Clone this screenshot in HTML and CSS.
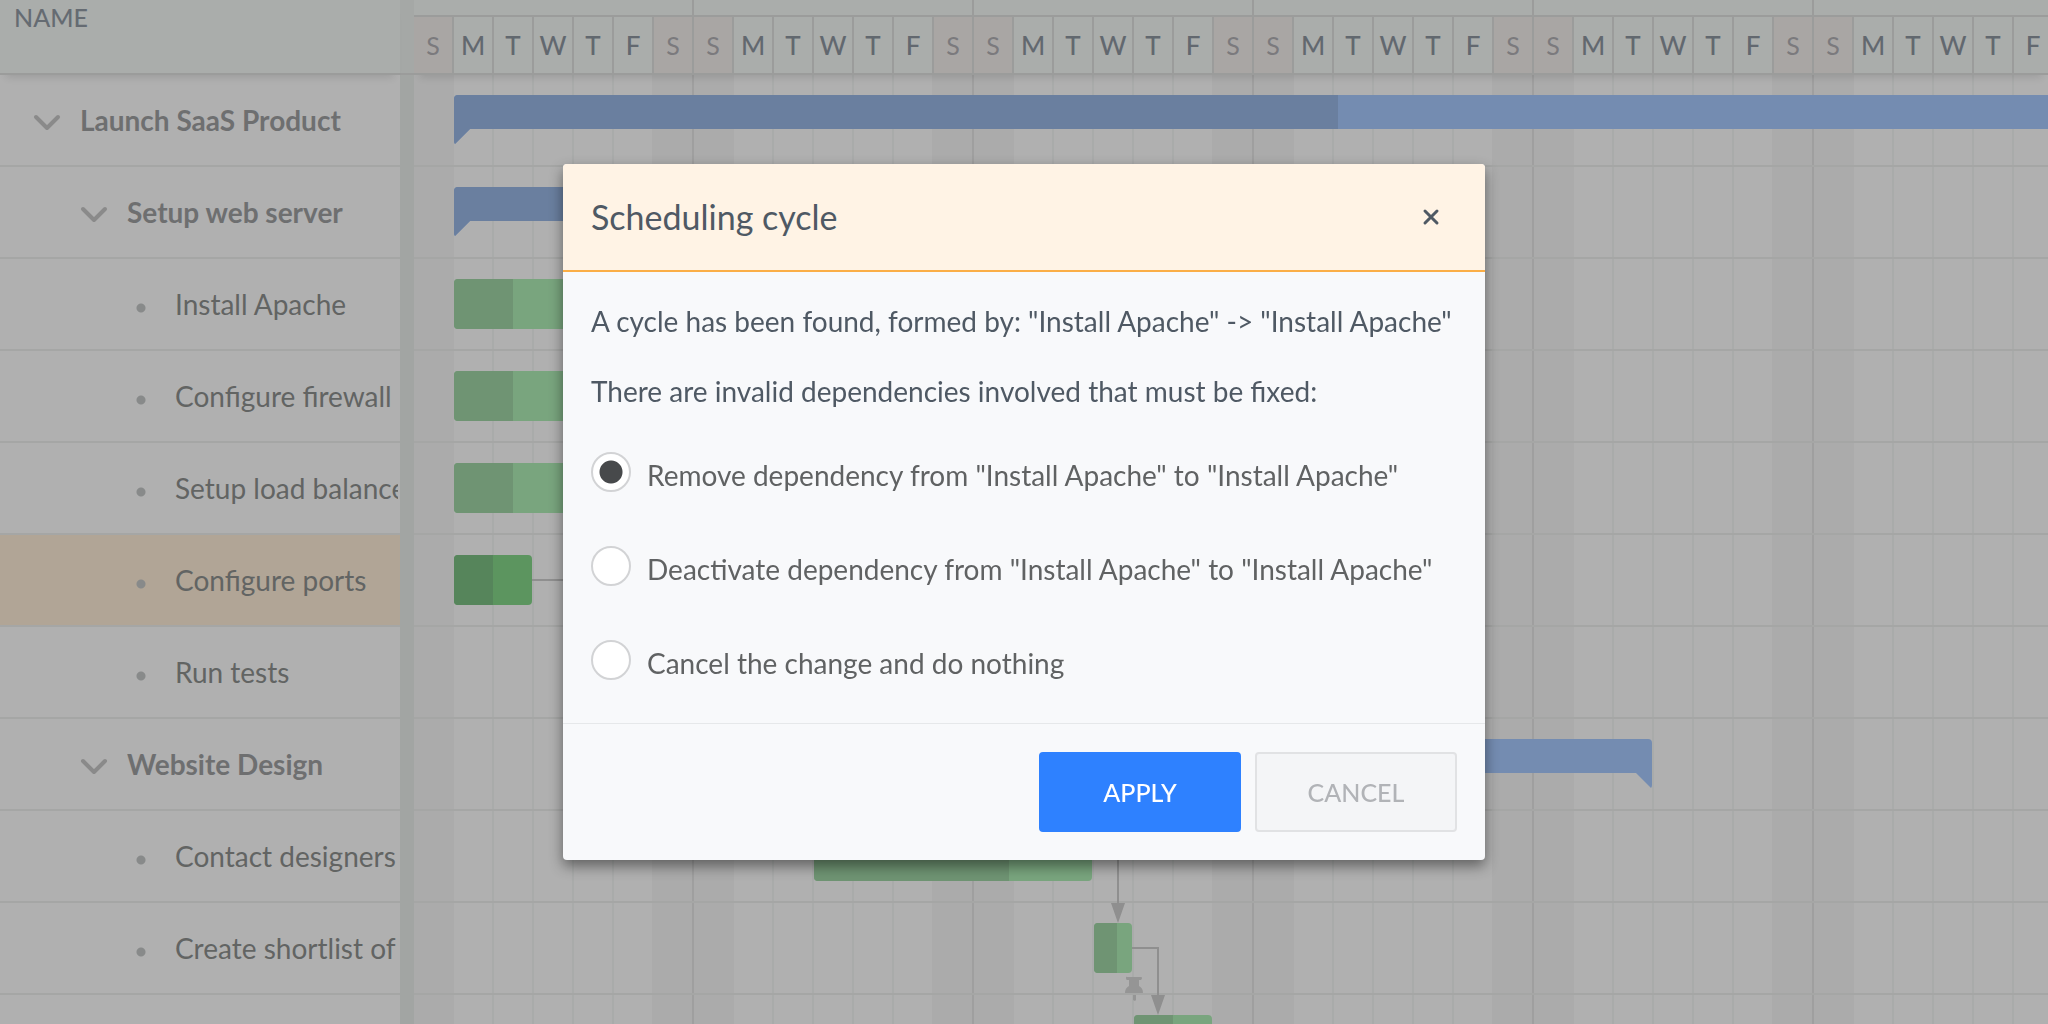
FILE: index.html
```html
<!doctype html>
<html lang="en">
<head>
<meta charset="utf-8">
<title>Scheduling cycle</title>
<link rel="stylesheet" href="styles.css">
</head>

<body>
<div class="gantt">
	<section class="tree">
		<div class="tree-header">NAME</div>
		<ul class="rows">
			<li class="row parent level-1"><button class="toggle" aria-label="Collapse"><svg viewBox="0 0 32 32"><path d="M5 13l11 11 11-11"/></svg></button><span class="name">Launch SaaS Product</span></li>
			<li class="row parent level-2"><button class="toggle" aria-label="Collapse"><svg viewBox="0 0 32 32"><path d="M5 13l11 11 11-11"/></svg></button><span class="name">Setup web server</span></li>
			<li class="row level-3"><i class="dot"></i><span class="name">Install Apache</span></li>
			<li class="row level-3"><i class="dot"></i><span class="name">Configure firewall</span></li>
			<li class="row level-3"><i class="dot"></i><span class="name">Setup load balancer</span></li>
			<li class="row level-3 selected"><i class="dot"></i><span class="name">Configure ports</span></li>
			<li class="row level-3"><i class="dot"></i><span class="name">Run tests</span></li>
			<li class="row parent level-2"><button class="toggle" aria-label="Collapse"><svg viewBox="0 0 32 32"><path d="M5 13l11 11 11-11"/></svg></button><span class="name">Website Design</span></li>
			<li class="row level-3"><i class="dot"></i><span class="name">Contact designers</span></li>
			<li class="row level-3"><i class="dot"></i><span class="name">Create shortlist of</span></li>
			<li class="row level-3"></li>
		</ul>
	</section>
	<div class="splitter"></div>
	<section class="timeline">
		<div class="time-header">
			<div class="weeks"></div>
			<div class="days" id="days"></div>
		</div>
		<div class="rows canvas">
			<div class="row"><div class="bar summary start" style="left:40px; width:1680px;"><span class="done" style="width:884px;"></span></div></div>
			<div class="row"><div class="bar summary start" style="left:40px; width:400px;"><span class="done" style="width:300px;"></span></div></div>
			<div class="row"><div class="bar" style="left:40px; width:118px;"><span class="done" style="width:59px;"></span></div></div>
			<div class="row"><div class="bar" style="left:40px; width:118px;"><span class="done" style="width:59px;"></span></div></div>
			<div class="row"><div class="bar" style="left:40px; width:118px;"><span class="done" style="width:59px;"></span></div></div>
			<div class="row"><div class="bar active" style="left:40px; width:78px;"><span class="done" style="width:39px;"></span></div></div>
			<div class="row"></div>
			<div class="row"><div class="bar summary end" style="left:400px; width:838px;"></div></div>
			<div class="row"><div class="bar" style="left:400px; width:278px;"><span class="done" style="width:195px;"></span></div></div>
			<div class="row"><div class="bar" style="left:680px; width:38px;"><span class="done" style="width:23px;"></span></div></div>
			<div class="row"><div class="bar" style="left:720px; width:78px;"><span class="done" style="width:39px;"></span></div></div>
			<svg class="links" width="1200" height="1012">
				<path class="line" d="M118 505H300M678 781H704V830M718 873H744V922"/>
				<path class="head" d="M697 828h14l-7 20zM737 920h14l-7 20z"/>
				<path class="pin" d="M713 902h14q1 0 1 1t-1 2h-2v6q4 2 4 7h-18q0-5 4-7v-6h-2q-1 0-1-2t1-1zM719 920h3v5l-1 1-2-1z"/>
			</svg>
		</div>
	</section>
</div>

<div class="mask">
	<form class="popup" role="dialog" aria-labelledby="title">
		<header class="popup-header">
			<h1 id="title">Scheduling cycle</h1>
			<button type="button" class="close" aria-label="Close"><svg viewBox="0 0 24 24"><path d="M6 6l12 12M18 6L6 18"/></svg></button>
		</header>
		<div class="popup-body">
			<p>A cycle has been found, formed by: "Install Apache" -&gt; "Install Apache"</p>
			<p>There are invalid dependencies involved that must be fixed:</p>
			<div class="options">
				<label><input type="radio" name="resolution" checked><span>Remove dependency from "Install Apache" to "Install Apache"</span></label>
				<label><input type="radio" name="resolution"><span>Deactivate dependency from "Install Apache" to "Install Apache"</span></label>
				<label><input type="radio" name="resolution"><span>Cancel the change and do nothing</span></label>
			</div>
		</div>
		<footer class="popup-footer">
			<button type="button" class="btn primary">APPLY</button>
			<button type="button" class="btn">CANCEL</button>
		</footer>
	</form>
</div>

<script>
var names = 'SMTWTFS';
var oDays = document.getElementById('days');
for(var i=0;i<42;i++){
	var day = document.createElement('span');
	day.className = i%7==0 || i%7==6 ? 'day weekend' : 'day';
	day.textContent = names[i%7];
	oDays.appendChild(day);
}
</script>
</body>
</html>
```
FILE: styles.css
```css
*{margin:0; padding:0; box-sizing:border-box; list-style:none;}
body{font-family:Lato, "Liberation Sans", sans-serif; font-size:28px; line-height:34px; background:#b0b0b0; overflow:hidden;}
button{border:0; background:none; font:inherit;}
svg{display:block; fill:none;}

/* gantt */
.gantt{display:grid; grid-template-columns:400px 14px minmax(0, 1fr); height:100vh; overflow:hidden;}
.tree{min-width:0;}
.tree-header, .time-header{height:75px; background:#aaadab; border-bottom:2px solid #9b9c9b; box-shadow:0 8px 8px -6px rgba(0,0,0,.12); position:relative;}
.tree-header{padding:0 14px; font-size:25px; font-weight:500; color:#656b72;}
.splitter{background:linear-gradient(#a5a8a6 73px, #9b9c9b 73px, #9b9c9b 75px, #a2a5a3 75px);}
.row{height:92px; border-bottom:2px solid #a5a6a5;}
.tree .row{display:flex; align-items:center; gap:17px; padding-right:2px; color:#626463;}
.level-1{padding-left:31px;}
.level-2{padding-left:78px;}
.level-3{padding-left:126px;}
.selected{background:#b1a596;}
.name{flex:1; min-width:0; overflow:hidden; white-space:nowrap;}
.parent .name{font-weight:700; color:#6e6f70;}
.toggle{flex:none; width:32px; height:32px;}
.toggle svg{stroke:#8a8a8a; stroke-width:4; stroke-linecap:round; stroke-linejoin:round;}
.dot{flex:none; width:32px; height:32px; background:radial-gradient(circle at 15px 20px, #888a8a 4px, transparent 5px);}

/* timeline */
.timeline{min-width:0; overflow:hidden;}
.time-header{z-index:1;}
.weeks{height:17px; border-bottom:2px solid #9b9c9b; background:repeating-linear-gradient(90deg, transparent 0 278px, #9b9c9b 278px 280px);}
.days{display:flex; overflow:hidden;}
.day{flex:none; width:40px; height:56px; border-right:2px solid #9b9c9b; text-align:center; font-size:26px; line-height:56px; font-weight:500; color:#62686f;}
.weekend{background:#a9a6a4; color:#7b7a7d; font-size:25px; font-weight:400;}
.canvas{position:relative; background:repeating-linear-gradient(90deg, #ababab 0 40px, transparent 40px 78px, #a9abaa 78px 80px, transparent 80px 118px, #a9abaa 118px 120px, transparent 120px 158px, #a9abaa 158px 160px, transparent 160px 198px, #a9abaa 198px 200px, transparent 200px 238px, #ababab 238px 278px, #9f9f9f 278px 280px);}
.canvas .row{position:relative;}
.bar{position:absolute; top:20px; height:50px; border-radius:4px; background:#79a57e; overflow:hidden;}
.done{display:block; height:100%; background:#6f9473;}
.active{background:#5c955f;}
.active .done{background:#56855b;}
.summary{background:#748cb1;}
.summary .done{background:#6a7f9f;}
.start{clip-path:polygon(0 0, 100% 0, 100% 34px, 16px 34px, 0 100%);}
.end{clip-path:polygon(0 0, 100% 0, 100% 100%, calc(100% - 16px) 34px, 0 34px);}
.links{position:absolute; top:0; left:0;}
.line{stroke:#8f8f8f; stroke-width:2;}
.head{fill:#8f8f8f;}
.pin{fill:#959595;}

/* popup */
.mask{position:fixed; inset:0; z-index:2; display:flex; align-items:center; justify-content:center;}
.popup{width:922px; max-width:100%; background:#f8f9fb; border-radius:4px; box-shadow:0 6px 14px rgba(0,0,0,.45); color:#4f5964; overflow:hidden;}
.popup-header{display:flex; align-items:center; justify-content:space-between; height:108px; padding:0 42px 0 28px; background:#fff3e5; border-bottom:2px solid #fbae46;}
.popup-header h1{font-size:34px; line-height:40px; font-weight:400;}
.close{width:24px; height:24px;}
.close svg{stroke:#4f5964; stroke-width:3; stroke-linecap:round;}
.popup-body{padding:32px 28px 43px;}
.popup-body p{margin-bottom:36px;}
.options{display:flex; flex-direction:column; gap:54px; padding-top:8px; color:#606263;}
.options label{display:flex; align-items:center; gap:16px; height:40px;}
.options input{appearance:none; flex:none; width:40px; height:40px; border:2px solid #d2d3d5; border-radius:50%; background:#fff;}
.options input:checked{background:radial-gradient(circle, #47494b 11px, #fff 12px);}
.options span{padding-top:6px;}
.popup-footer{display:flex; justify-content:flex-end; gap:14px; padding:28px; border-top:1px solid #e6e8ea;}
.btn{width:202px; height:80px; border:2px solid #e1e2e4; border-radius:4px; background:#f4f5f7; color:#b1b3b7; font-size:25px; font-weight:500;}
.primary{background:#2e81ff; border-color:#2e81ff; color:#fff;}
```
